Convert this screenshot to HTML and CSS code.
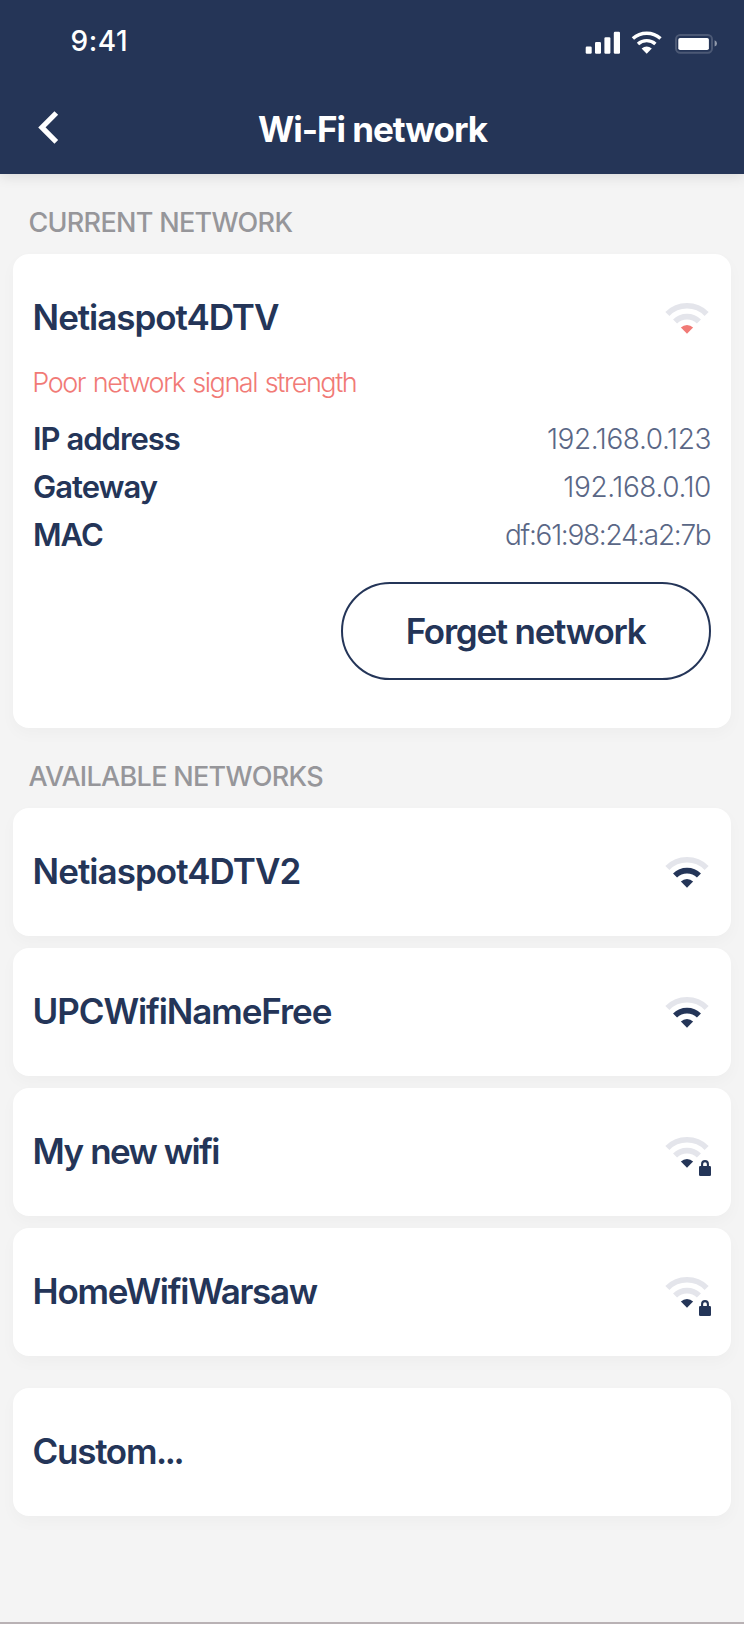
FILE: index.html
```html
<!DOCTYPE html>
<html lang="en">
<head>
<meta charset="utf-8">
<title>Wi-Fi network</title>
<link rel="stylesheet" href="styles.css">
</head>
<body>
<svg class="sprite" aria-hidden="true">
  <symbol id="wifi" viewBox="0 0 46 42">
    <path class="arc-outer" d="M2.4 12.9A27.7 27.7 0 0 1 41.6 12.9"/>
    <path class="arc-inner" d="M10.05 20.55A16.9 16.9 0 0 1 33.95 20.55"/>
    <path class="arc-dot" d="M22 32.8L15.9 26.6A8.6 8.6 0 0 1 28.1 26.6Z"/>
  </symbol>
  <symbol id="lock" viewBox="0 0 46 42">
    <path class="shackle" d="M37.1 32V29a2.9 2.9 0 0 1 5.8 0V32"/>
    <rect class="lock-body" x="34" y="31" width="12" height="10" rx="1.3"/>
  </symbol>
</svg>
<div class="screen">
  <header class="header">
    <div class="status">
      <span class="time">9:41</span>
      <svg class="status-icons" width="132" height="23" viewBox="0 0 132 23">
        <g fill="#fff">
          <rect x=".7" y="15.6" width="6" height="7.1" rx="1.2"/>
          <rect x="10" y="11" width="6" height="11.7" rx="1.2"/>
          <rect x="19.4" y="6.2" width="6" height="16.5" rx="1.2"/>
          <rect x="28.8" y=".8" width="6.2" height="21.9" rx="1.2"/>
          <path d="M61.7 22.8L56.6 17.6Q61.7 13.2 66.8 17.6Z"/>
          <rect x="93.3" y="7" width="30.6" height="12" rx="1.8"/>
        </g>
        <g fill="none" stroke="#fff" stroke-width="3.4">
          <path d="M47.9 7.6A20.3 20.3 0 0 1 75.5 7.6"/>
          <path d="M53 13A13 13 0 0 1 70.4 13"/>
        </g>
        <rect x="91" y="4" width="36" height="17.8" rx="4.2" fill="none" stroke="#fff" stroke-opacity=".18" stroke-width="2"/>
        <path d="M129.6 9.2Q132 10.2 132 12.4Q132 14.6 129.6 15.6Z" fill="#fff" opacity=".5"/>
      </svg>
    </div>
    <nav class="nav">
      <svg class="back" width="22" height="36" viewBox="0 0 22 36"><path d="M18.3 2L3.9 16.4L18.3 30.8"/></svg>
      <h1 class="title">Wi-Fi network</h1>
    </nav>
  </header>
  <main>
    <h2 class="section">CURRENT NETWORK</h2>
    <section class="card current">
      <div class="current-head">
        <span class="name t-netia">Netiaspot4DTV</span>
        <svg class="signal poor"><use href="#wifi"/></svg>
      </div>
      <p class="warning">Poor network signal strength</p>
      <dl class="details">
        <dt>IP address</dt><dd>192.168.0.123</dd>
        <dt>Gateway</dt><dd>192.168.0.10</dd>
        <dt>MAC</dt><dd class="mac">df:61:98:24:a2:7b</dd>
      </dl>
      <button class="forget">Forget network</button>
    </section>
    <h2 class="section available">AVAILABLE NETWORKS</h2>
    <ul class="list">
      <li class="card row"><span class="name t-netia2">Netiaspot4DTV2</span><svg class="signal medium"><use href="#wifi"/></svg></li>
      <li class="card row"><span class="name t-upc">UPCWifiNameFree</span><svg class="signal medium"><use href="#wifi"/></svg></li>
      <li class="card row"><span class="name t-my">My new wifi</span><svg class="signal weak"><use href="#wifi"/><use href="#lock"/></svg></li>
      <li class="card row"><span class="name t-home">HomeWifiWarsaw</span><svg class="signal weak"><use href="#wifi"/><use href="#lock"/></svg></li>
    </ul>
    <div class="card row custom"><span class="name t-custom">Custom<span class="dots">...</span></span></div>
  </main>
</div>
</body>
</html>
```
FILE: styles.css
```css
* { box-sizing: border-box; margin: 0; padding: 0; }
body { background: #fff; font-family: Inter, "Liberation Sans", sans-serif; color: #243558; }
.sprite { display: none; }
.screen { width: 744px; height: 1624px; background: #f4f4f4; border-bottom: 2px solid #b9b2b5; }

.header { height: 174px; background: #253557; color: #fff; box-shadow: 0 3px 12px rgba(0, 0, 0, .1); }
.status { height: 82px; display: flex; align-items: center; justify-content: space-between; padding: 0 27px 0 70.5px; }
.time { font-size: 28px; font-weight: 500; letter-spacing: .6px; }
.status-icons { margin-top: 3px; }
.nav { height: 92px; padding: 2px 38px 0; display: grid; grid-template-columns: 22px 1fr 22px; align-items: center; }
.back path { fill: none; stroke: #fff; stroke-width: 5.2; }
.title { padding-left: 1px; font-size: 35px; font-weight: 700; letter-spacing: -1.02px; text-align: center; }

.section { height: 80px; padding: 17px 28.4px 0; font-size: 27px; font-weight: 500; line-height: 63px; letter-spacing: -.69px; color: #96969a; }
.card { margin: 0 13px; background: #fff; border-radius: 16px; box-shadow: 0 6px 16px rgba(0, 0, 0, .028); }
.current { height: 474px; padding: 0 20px; display: flex; flex-direction: column; }
.current-head { height: 104px; padding-top: 24px; display: flex; align-items: center; justify-content: space-between; }
.name { margin-left: -.4px; padding-bottom: 2px; font-size: 35px; font-weight: 600; }
.warning { height: 48px; margin-left: -.7px; line-height: 50px; font-size: 27px; font-weight: 300; letter-spacing: -1.45px; word-spacing: 1.6px; color: #f17a76; }
.details { margin-top: 8px; display: grid; grid-template-columns: auto 1fr; grid-auto-rows: 48px; align-items: center; }
.details dt { font-size: 31px; font-weight: 600; letter-spacing: -1px; line-height: 49px; }
.details dd { padding-top: 1px; font-size: 28px; font-weight: 300; letter-spacing: -.4px; text-align: right; color: #5a6786; }
.details .mac { letter-spacing: -1.29px; padding-right: .6px; }
.forget { width: 370px; height: 98px; margin-top: 24px; padding-right: 1px; align-self: flex-end; border: 2px solid #243558; border-radius: 49px; background: #fff; color: inherit; font: 600 35px Inter, "Liberation Sans", sans-serif; letter-spacing: -1.26px; }

.list { list-style: none; display: flex; flex-direction: column; gap: 12px; }
.row { height: 128px; padding: 0 20px; display: flex; align-items: center; justify-content: space-between; }
.custom { margin-top: 32px; }
.t-netia { letter-spacing: -1.05px; }
.t-netia2 { letter-spacing: -.96px; }
.t-upc { letter-spacing: -1.1px; }
.t-my { letter-spacing: -1.65px; word-spacing: .5px; }
.t-home { letter-spacing: -1.27px; }
.t-custom { letter-spacing: -1.3px; }
.dots { letter-spacing: -2.5px; }

.signal { width: 46px; height: 42px; margin-top: 8px; --outer: #e4e5eb; --inner: #e4e5eb; --dot: #243558; }
.poor { --dot: #f17a76; }
.medium { --inner: #243558; }
.arc-outer { fill: none; stroke: var(--outer); stroke-width: 5.7; }
.arc-inner { fill: none; stroke: var(--inner); stroke-width: 5.7; }
.arc-dot { fill: var(--dot); }
.shackle { fill: none; stroke: #243558; stroke-width: 2.1; }
.lock-body { fill: #243558; }
```
